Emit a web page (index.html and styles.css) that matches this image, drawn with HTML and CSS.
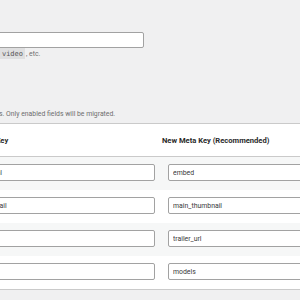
FILE: index.html
```html
<!DOCTYPE html>
<html lang="en">
<head>
<meta charset="utf-8">
<title>Meta Key Migration</title>
<link rel="stylesheet" href="styles.css">
</head>
<body>
<div class="wrap">
  <div class="field">
    <input class="text-input wide" type="text" value="">
    <p class="description keys-hint">Meta keys to scan, e.g. <code>video</code>, etc.</p>
  </div>
  <p class="description note">Map old keys to new keys. Only enabled fields will be migrated.</p>
  <table class="map-table">
    <thead>
      <tr>
        <th class="col-enable"></th>
        <th class="col-old">Source Meta Key</th>
        <th class="col-new">New Meta Key (Recommended)</th>
      </tr>
    </thead>
    <tbody>
      <tr class="alt">
        <td class="cell-enable"><input type="checkbox" checked></td>
        <td class="cell-old"><input class="text-input" type="text" value="embed_html"></td>
        <td class="cell-new"><input class="text-input" type="text" value="embed"></td>
      </tr>
      <tr>
        <td class="cell-enable"><input type="checkbox" checked></td>
        <td class="cell-old"><input class="text-input" type="text" value="vid_thumbnail"></td>
        <td class="cell-new"><input class="text-input" type="text" value="main_thumbnail"></td>
      </tr>
      <tr class="alt">
        <td class="cell-enable"><input type="checkbox" checked></td>
        <td class="cell-old"><input class="text-input" type="text" value="trailer"></td>
        <td class="cell-new"><input class="text-input" type="text" value="trailer_url"></td>
      </tr>
      <tr>
        <td class="cell-enable"><input type="checkbox" checked></td>
        <td class="cell-old"><input class="text-input" type="text" value="actors"></td>
        <td class="cell-new"><input class="text-input" type="text" value="models"></td>
      </tr>
    </tbody>
  </table>
</div>
</body>
</html>
```
FILE: styles.css
```css
html, body {
  margin: 0;
  padding: 0;
}
body {
  background: #f0f0f1;
  font-family: Roboto, "Noto Sans", sans-serif;
  font-size: 6.85px;
  color: #3c3c3c;
  overflow: hidden;
  width: 300px;
  height: 300px;
}
.wrap {
  margin-left: -80px;
  width: 480px;
  padding-top: 32px;
}
.text-input {
  box-sizing: border-box;
  display: block;
  height: 16px;
  margin: 0;
  padding: 0 4px;
  border: 1px solid #a2a2a2;
  border-radius: 2px;
  background: #fff;
  font-family: Roboto, "Noto Sans", sans-serif;
  font-size: 6.9px;
  color: #3a3a3a;
  outline: none;
}
.wide {
  width: 224px;
}
.description {
  margin: 1px 0 0;
  line-height: 11px;
  color: #6e6e6e;
}
.keys-hint {
  padding-left: 8px;
}
.description code {
  font-family: "DejaVu Sans Mono", monospace;
  font-size: 7px;
  background: rgba(0, 0, 0, 0.07);
  padding: 2px 2px 1px;
  margin: 0 1px;
  color: #555555;
}
.note {
  margin-top: 49px;
  padding-left: 5px;
}
.map-table {
  margin-top: 3px;
  width: 480px;
  table-layout: fixed;
  border-collapse: collapse;
  background: #fff;
  border: 1px solid #cacaca;
}
.map-table th {
  height: 32px;
  padding: 0 5px;
  text-align: left;
  font-size: 7.6px;
  font-weight: 700;
  color: #2a2a2a;
  border-bottom: 1px solid #cacaca;
}
.map-table th.col-old {
  padding-left: 0.5px;
}
.col-enable { width: 19px; }
.col-old { width: 201.5px; }
.map-table td {
  height: 32px;
  box-sizing: border-box;
  padding: 7px 0 8px;
  vertical-align: top;
}
.map-table tr.alt td {
  background: #f6f7f7;
}
.map-table td .text-input {
  height: 17px;
}
.cell-enable {
  text-align: center;
}
.cell-enable input {
  margin: 3px 0 0;
}
.cell-old {
  padding-left: 9px !important;
  padding-right: 2px !important;
}
.cell-old .text-input {
  width: 100%;
}
.cell-new {
  padding-left: 11px !important;
}
.cell-new .text-input {
  width: 196px;
}
```
